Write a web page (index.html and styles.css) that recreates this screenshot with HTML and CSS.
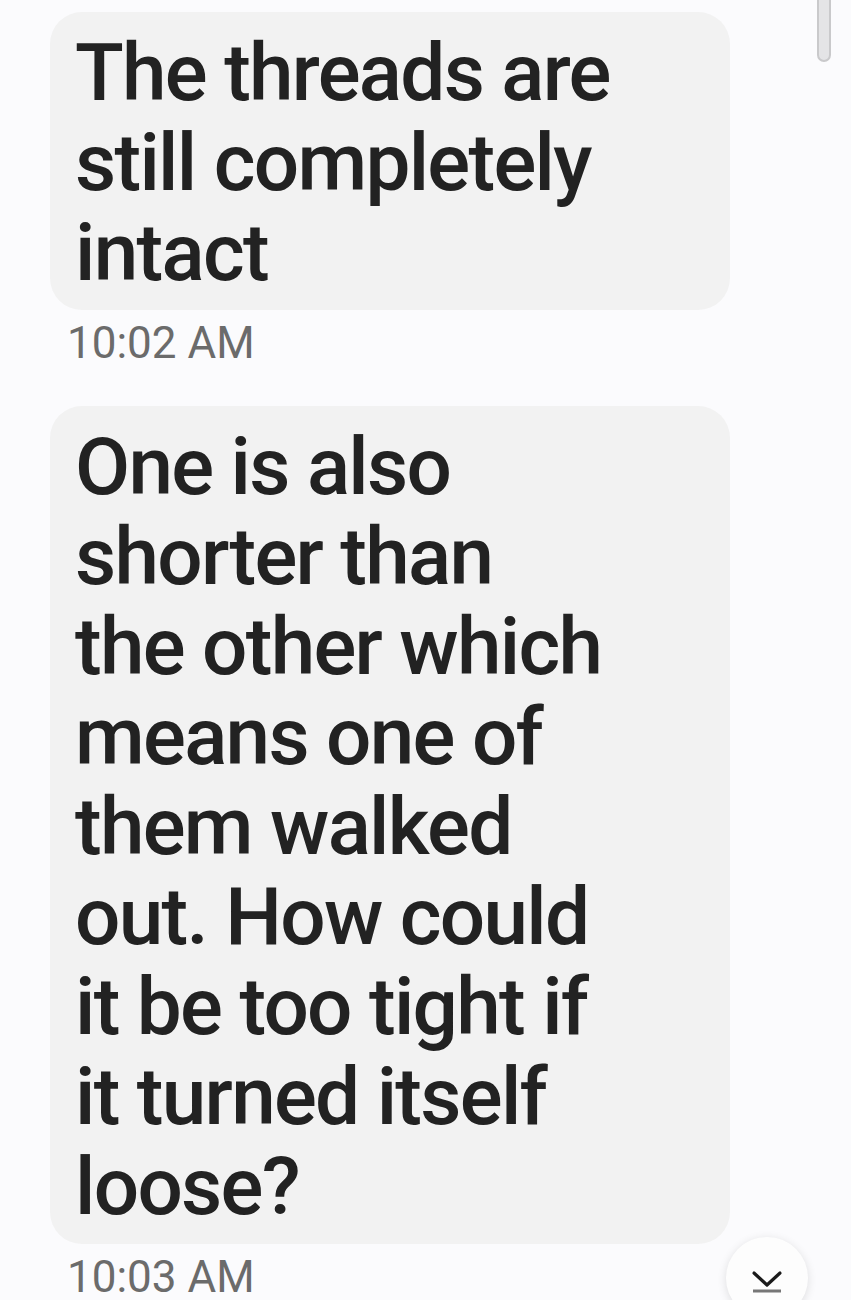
FILE: index.html
```html
<!DOCTYPE html>
<html lang="en">
<head>
    <meta charset="UTF-8">
    <meta name="viewport" content="width=device-width, initial-scale=1.0">
    <title>Messages</title>
    <link rel="stylesheet" href="styles.css">
</head>
<body>
    <main class="thread">
        <div class="message">
            <div class="bubble">The threads are<br>still completely<br>intact</div>
            <div class="time">10:02 AM</div>
        </div>
        <div class="message">
            <div class="bubble">One is also<br>shorter than<br>the other which<br>means one of<br>them walked<br>out. How could<br>it be too tight if<br>it turned itself<br>loose?</div>
            <div class="time">10:03 AM</div>
        </div>
    </main>

    <!-- scrollbar thumb -->
    <div class="scroll-thumb"></div>

    <!-- jump to latest -->
    <button class="jump-down" aria-label="Scroll to bottom">
        <svg width="32" height="24" viewBox="0 0 32 24">
            <path d="M3 3 L16 15 L29 3" fill="none" stroke="#1a1a1a" stroke-width="3.2" stroke-linecap="round" stroke-linejoin="round"/>
            <line x1="2" y1="21" x2="30" y2="21" stroke="#777" stroke-width="3"/>
        </svg>
    </button>
</body>
</html>
```

FILE: styles.css
```css
* {
    margin: 0;
    padding: 0;
    box-sizing: border-box;
}
body {
    font-family: 'Roboto', 'Noto Sans', sans-serif;
    background: #fbfbfd;
    color: #222;
    height: 1300px;
    overflow: hidden;
}
.thread {
    display: flex;
    flex-direction: column;
    gap: 38px;
    padding: 12px 0 0 50px;
}
.message {
    display: flex;
    flex-direction: column;
}
.bubble {
    width: 680px;
    background: #f2f2f2;
    border-radius: 32px;
    padding: 16px 24px 12px 25px;
    font-size: 80px;
    line-height: 90px;
    font-weight: 500;
    letter-spacing: -1.7px;
    color: #222;
    white-space: nowrap;
}
.time {
    margin-top: 8px;
    padding-left: 17px;
    font-size: 44px;
    line-height: 50px;
    color: #6b6b6b;
}

/* overlays */
.scroll-thumb {
    position: fixed;
    top: -10px;
    left: 817px;
    width: 14px;
    height: 72px;
    background: #e4e4e6;
    border: 2px solid #c9c9cb;
    border-radius: 7px;
}
.jump-down {
    position: fixed;
    left: 726px;
    top: 1237px;
    width: 82px;
    height: 82px;
    border: none;
    border-radius: 50%;
    background: #fdfdfd;
    box-shadow: 0 2px 10px rgba(0, 0, 0, 0.12);
    display: flex;
    justify-content: center;
    padding-top: 33px;
    cursor: pointer;
}
```
